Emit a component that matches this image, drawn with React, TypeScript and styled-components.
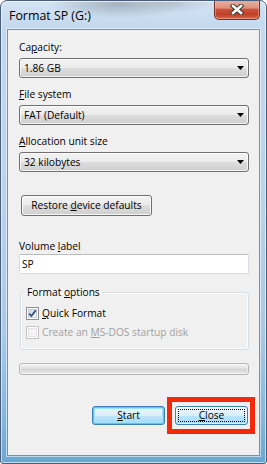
import React from 'react';
import styled, { createGlobalStyle } from 'styled-components';

const FONT = `"Open Sans", "Noto Sans", sans-serif`;

const GlobalStyle = createGlobalStyle`
  html, body { margin: 0; padding: 0; background: #ffffff; }
  body { width: 267px; height: 464px; overflow: hidden; font-family: ${FONT}; }
  * { box-sizing: border-box; }
  u { text-decoration-thickness: 1px; text-underline-offset: 1px; }
`;

const Window = styled.div`
  width: 267px;
  height: 464px;
  display: flex;
  flex-direction: column;
  border: 1px solid #475f7c;
  border-radius: 7px 7px 3px 3px;
  overflow: hidden;
  background:
    radial-gradient(ellipse 70px 14px at 118px 3px, rgba(110, 118, 128, 0.45), rgba(110, 118, 128, 0) 100%),
    radial-gradient(ellipse 40px 10px at 175px 2px, rgba(140, 150, 160, 0.3), rgba(140, 150, 160, 0) 100%),
    linear-gradient(180deg, #d3e3f3 0px, #c3d8ee 28px, #bad2ec 200px, #a9c9e8 330px, #83b6dc 420px, #69a4d0 464px);
  box-shadow: inset 0 0 0 1px rgba(255, 255, 255, 0.6);
`;

const TitleBar = styled.div`
  height: 28px;
  flex: none;
  display: flex;
  align-items: center;
  padding-left: 8px;
`;

const Title = styled.span`
  font: 12.4px/16px ${FONT};
  color: #000;
  margin-top: 1px;
`;

const CloseBox = styled.div`
  margin-left: auto;
  margin-right: 6px;
  align-self: flex-start;
  margin-top: -1px;
  width: 46px;
  height: 20px;
  border: 1px solid #6e3327;
  border-top: none;
  border-radius: 0 0 5px 5px;
  background: linear-gradient(180deg, #eab3a5 0%, #dc9180 42%, #c9533c 50%, #c03f26 75%, #d8694f 100%);
  box-shadow: inset 0 0 0 1px rgba(255, 200, 185, 0.45);
  display: flex;
  align-items: center;
  justify-content: center;
`;

const Client = styled.div`
  flex: 1;
  margin: 0 6px 7px 6px;
  border: 1px solid #7d8fa3;
  box-shadow: 0 0 0 1px rgba(255, 255, 255, 0.55);
  background: #f0f0f0;
  display: flex;
  flex-direction: column;
  padding: 10px 10px 0 11px;
  font: 10.2px/15px ${FONT};
  color: #000;
`;

const Field = styled.div<{ $mb: number }>`
  display: flex;
  flex-direction: column;
  margin-bottom: ${(p) => p.$mb}px;
`;

const Label = styled.div<{ $mb: number }>`
  height: 15px;
  white-space: nowrap;
  margin-bottom: ${(p) => p.$mb}px;
`;

const Combo = styled.div`
  height: 20px;
  border: 1px solid #707070;
  border-radius: 3px;
  background: linear-gradient(180deg, #f2f2f2 0%, #ebebeb 50%, #dddddd 50%, #cfcfcf 100%);
  box-shadow: inset 0 0 0 1px rgba(255, 255, 255, 0.75);
  display: flex;
  align-items: center;
  justify-content: space-between;
  padding: 0 4px 0 4px;
  white-space: nowrap;
`;

const PushButton = styled.div<{ $w: number; $h: number }>`
  width: ${(p) => p.$w}px;
  height: ${(p) => p.$h}px;
  border: 1px solid #707070;
  border-radius: 3px;
  background: linear-gradient(180deg, #f2f2f2 0%, #ebebeb 50%, #dddddd 50%, #cfcfcf 100%);
  box-shadow: inset 0 0 0 1px rgba(255, 255, 255, 0.8);
  display: flex;
  align-items: center;
  justify-content: center;
  white-space: nowrap;
`;

const RestoreButton = styled(PushButton)`
  align-self: flex-start;
  margin-left: 2px;
  margin-bottom: 23px;
`;

const BlueButton = styled(PushButton)<{ $glow?: boolean }>`
  position: relative;
  border-color: #3c7fb1;
  background: linear-gradient(180deg, #eaf6fd 0%, #d9f0fc 50%, #bee6fd 50%, #a7d9f5 100%);
  box-shadow: ${(p) =>
    p.$glow
      ? 'inset 0 0 0 1px #4fcdf6, inset 0 0 0 2px #9ee2fb'
      : 'inset 0 0 0 1px rgba(255,255,255,0.6)'};
`;

const FocusRect = styled.span`
  position: absolute;
  inset: 2px;
  border: 1px dotted #000;
  pointer-events: none;
`;

const TextBox = styled.div`
  height: 20px;
  border: 1px solid #dadce1;
  border-top-color: #b9bcc2;
  border-radius: 2px;
  background: #fff;
  display: flex;
  align-items: center;
  padding-left: 2px;
`;

const Group = styled.fieldset`
  margin: 11px 0 0 1px;
  padding: 5px 0 8px 5px;
  border: 1px solid #d5dfe5;
  border-radius: 3px;
  box-shadow: inset 0 0 0 1px rgba(255, 255, 255, 0.8);
  min-inline-size: 0;
  display: flex;
  flex-direction: column;
  gap: 2px;
`;

const Legend = styled.legend`
  padding: 0 2px;
  margin-left: -1px;
  line-height: 15px;
`;

const CheckRow = styled.div<{ $disabled?: boolean }>`
  height: 17px;
  display: flex;
  align-items: center;
  gap: 3px;
  color: ${(p) => (p.$disabled ? '#a0a0a0' : '#000')};
  white-space: nowrap;
`;

const Box = styled.span<{ $disabled?: boolean }>`
  width: 13px;
  height: 13px;
  flex: none;
  border: 1px solid ${(p) => (p.$disabled ? '#c4c4c4' : '#8e8f8f')};
  background: #fff;
  padding: 1px;
  display: flex;
`;

const BoxInner = styled.span<{ $disabled?: boolean }>`
  flex: 1;
  position: relative;
  background: ${(p) =>
    p.$disabled
      ? '#f4f4f4'
      : 'linear-gradient(135deg, #c9d3e2 0%, #e3e9f2 55%, #f6f8fb 100%)'};
  border: 1px solid ${(p) => (p.$disabled ? '#e4e4e4' : '#c6cedb')};
`;

const CheckMark = styled.svg`
  position: absolute;
  left: -2px;
  top: -2px;
`;

const Progress = styled.div`
  margin-top: 13px;
  height: 12px;
  border: 1px solid #b6b6b6;
  border-radius: 3px;
  background: linear-gradient(180deg, #f4f4f4 0%, #e6e6e6 35%, #d6d6d6 55%, #dfdfdf 80%, #eaeaea 100%);
  box-shadow: inset 0 0 0 1px rgba(255, 255, 255, 0.5);
`;

const ButtonRow = styled.div`
  margin-top: 31px;
  display: flex;
  justify-content: flex-end;
  gap: 10px;
  padding-right: 1px;
`;

const CalloutWrap = styled.div`
  position: relative;
`;

const Callout = styled.span`
  position: absolute;
  left: -8px;
  right: -7px;
  top: -9px;
  bottom: -9px;
  border: 5px solid #f3290e;
  pointer-events: none;
`;

const Arrow = () => (
  <svg width="7" height="4" viewBox="0 0 7 4">
    <path d="M0 0 H7 L3.5 4 Z" fill="#000" />
  </svg>
);

const CloseGlyph = () => (
  <svg width="14" height="11" viewBox="0 0 14 11">
    <path d="M3 2 L11 9 M11 2 L3 9" stroke="#3a3a3a" strokeWidth="4.6" strokeLinecap="square" fill="none" />
    <path d="M3 2 L11 9 M11 2 L3 9" stroke="#ffffff" strokeWidth="2.6" strokeLinecap="square" fill="none" />
  </svg>
);

const Checkbox: React.FC<{ checked?: boolean; disabled?: boolean }> = ({ checked, disabled }) => (
  <Box $disabled={disabled}>
    <BoxInner $disabled={disabled}>
      {checked && (
        <CheckMark width="11" height="11" viewBox="0 0 11 11">
          <path d="M2.2 5.6 L4.4 8 L8.8 2.4" stroke="#34497a" strokeWidth="1.7" fill="none" />
        </CheckMark>
      )}
    </BoxInner>
  </Box>
);

const fields = [
  { label: <>Ca<u>p</u>acity:</>, value: '1.86 GB' },
  { label: <><u>F</u>ile system</>, value: 'FAT (Default)' },
  { label: <><u>A</u>llocation unit size</>, value: '32 kilobytes' },
];

export default function App() {
  return (
    <>
      <GlobalStyle />
      <Window>
        <TitleBar>
          <Title>Format SP (G:)</Title>
          <CloseBox>
            <CloseGlyph />
          </CloseBox>
        </TitleBar>
        <Client>
          {fields.map((f, i) => (
            <Field key={i} $mb={i === fields.length - 1 ? 23 : 9}>
              <Label $mb={3}>{f.label}</Label>
              <Combo>
                <span>{f.value}</span>
                <Arrow />
              </Combo>
            </Field>
          ))}
          <RestoreButton $w={131} $h={21}>
            <span>
              Restore <u>d</u>evice defaults
            </span>
          </RestoreButton>
          <Label $mb={0}>
            Volume <u>l</u>abel
          </Label>
          <TextBox>SP</TextBox>
          <Group>
            <Legend>
              Format <u>o</u>ptions
            </Legend>
            <CheckRow>
              <Checkbox checked />
              <span>
                <u>Q</u>uick Format
              </span>
            </CheckRow>
            <CheckRow $disabled>
              <Checkbox disabled />
              <span>
                Create an <u>M</u>S-DOS startup disk
              </span>
            </CheckRow>
          </Group>
          <Progress />
          <ButtonRow>
            <BlueButton $w={73} $h={19} $glow>
              <span>
                <u>S</u>tart
              </span>
            </BlueButton>
            <CalloutWrap>
              <BlueButton $w={73} $h={19}>
                <span>
                  <u>C</u>lose
                </span>
                <FocusRect />
              </BlueButton>
              <Callout />
            </CalloutWrap>
          </ButtonRow>
        </Client>
      </Window>
    </>
  );
}
